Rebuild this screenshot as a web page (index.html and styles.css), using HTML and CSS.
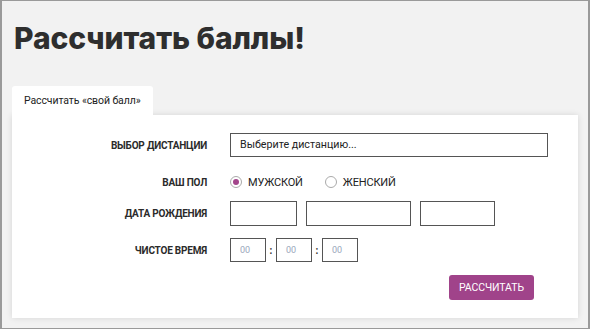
FILE: index.html
```html
<!DOCTYPE html>
<html lang="ru">
<head>
<meta charset="utf-8">
<link rel="stylesheet" href="styles.css">
</head>
<body>
<div class="page">
  <h1 class="title">Рассчитать баллы!</h1>
  <div class="tabs">
    <div class="tab">Рассчитать «свой балл»</div>
  </div>
  <div class="panel">
    <div class="row row-dist">
      <div class="label">ВЫБОР ДИСТАНЦИИ</div>
      <div class="ctrl"><div class="select">Выберите дистанцию...</div></div>
    </div>
    <div class="row row-sex">
      <div class="label">ВАШ ПОЛ</div>
      <div class="ctrl radios">
        <span class="radio checked"></span><span class="rlabel">МУЖСКОЙ</span>
        <span class="radio second"></span><span class="rlabel">ЖЕНСКИЙ</span>
      </div>
    </div>
    <div class="row row-date">
      <div class="label">ДАТА РОЖДЕНИЯ</div>
      <div class="ctrl dates">
        <div class="box d1"></div>
        <div class="box d2"></div>
        <div class="box d3"></div>
      </div>
    </div>
    <div class="row row-time">
      <div class="label">ЧИСТОЕ ВРЕМЯ</div>
      <div class="ctrl times">
        <div class="box t">00</div><span class="colon">:</span>
        <div class="box t">00</div><span class="colon">:</span>
        <div class="box t">00</div>
      </div>
    </div>
    <div class="actions">
      <div class="btn">РАССЧИТАТЬ</div>
    </div>
  </div>
</div>
</body>
</html>
```
FILE: styles.css
```css
* { box-sizing: border-box; }
html, body { margin: 0; padding: 0; }
body {
  width: 590px;
  height: 329px;
  overflow: hidden;
  background: #f2f2f2;
  font-family: Roboto, "Liberation Sans", sans-serif;
}
.page {
  width: 590px;
  height: 329px;
  border-top: 1px solid #9a9a9a;
  border-bottom: 1px solid #9a9a9a;
  border-left: 2px solid #9a9a9a;
  border-right: 2px solid #9a9a9a;
  padding: 0 10px 0 10px;
}
.title {
  margin: 17px 0 0 2px;
  font-family: Inter, "Open Sans", sans-serif;
  font-weight: 800;
  font-size: 30px;
  line-height: 40px;
  color: #2e2e2e;
  letter-spacing: -0.1px;
}
.tabs { display: flex; margin-top: 28px; }
.tab {
  background: #fff;
  width: 141px;
  height: 29px;
  border-radius: 3px 3px 0 0;
  font-size: 10.5px;
  letter-spacing: -0.1px;
  color: #222;
  padding-left: 12px;
  line-height: 29px;
  position: relative;
  z-index: 2;
}
.panel {
  background: #fff;
  width: 566px;
  height: 203px;
  box-shadow: 0 0 6px rgba(0,0,0,0.12);
  padding-top: 18px;
  display: flex;
  flex-direction: column;
}
.row {
  display: grid;
  grid-template-columns: 195px 1fr;
  column-gap: 23px;
  align-items: center;
}
.label {
  text-align: right;
  font-weight: 700;
  font-size: 10px;
  color: #2b2b2b;
  letter-spacing: -0.2px;
}
.row-dist { height: 24px; }
.row-sex { height: 24px; margin-top: 13px; }
.row-date { height: 25px; margin-top: 7px; }
.row-time { height: 24px; margin-top: 12px; }
.select {
  width: 318px;
  height: 24px;
  border: 1px solid #555;
  font-size: 10.7px;
  color: #222;
  line-height: 22px;
  padding-left: 9px;
}
.radios { display: flex; align-items: center; }
.radio {
  width: 12px; height: 12px;
  border: 1px solid #aaa;
  border-radius: 50%;
  display: inline-block;
  position: relative;
}
.radio.checked::after {
  content: "";
  position: absolute;
  left: 2px; top: 2px;
  width: 6px; height: 6px;
  border-radius: 50%;
  background: #a3458b;
}
.radio.second { margin-left: 22px; }
.rlabel { font-size: 11px; color: #222; margin-left: 6px; letter-spacing: -0.15px; }
.dates { display: flex; gap: 9px; }
.box {
  border: 1px solid #555;
  height: 25px;
}
.d1 { width: 67px; }
.d2 { width: 105px; }
.d3 { width: 75px; }
.times { display: flex; align-items: center; }
.box.t {
  width: 36px;
  height: 24px;
  font-size: 9px;
  color: #9aa8bb;
  padding-left: 9px;
  line-height: 22px;
}
.colon {
  width: 10px;
  text-align: center;
  font-size: 10px;
  font-weight: 700;
  color: #333;
}
.actions {
  display: flex;
  justify-content: flex-end;
  margin-top: 13px;
  padding-right: 44px;
}
.btn {
  width: 85px;
  height: 25px;
  background: #a0438a;
  border-radius: 3px;
  color: #fff;
  font-size: 10.5px;
  text-align: center;
  line-height: 25px;
  letter-spacing: -0.1px;
}
```
